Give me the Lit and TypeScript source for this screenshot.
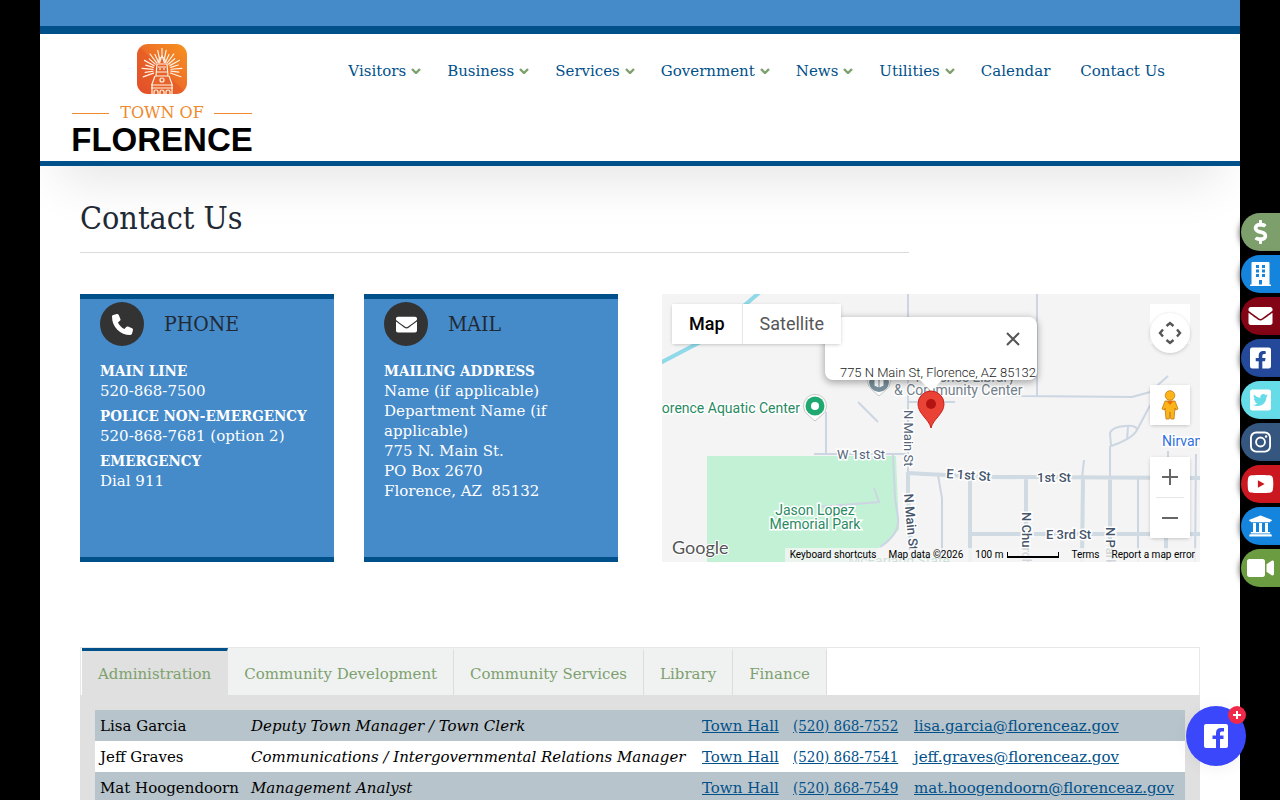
import { LitElement, html, css, svg, nothing } from "lit";
import { customElement, property, state } from "lit/decorators.js";
import { classMap } from "lit/directives/class-map.js";

type Icon = { box: string; path: string };

const ICONS: Record<string, Icon> = {
  phone: {
    box: "0 0 512 512",
    path: "M164.9 24.6c-7.7-18.6-28-28.5-47.4-23.2l-88 24C12.1 30.2 0 46 0 64C0 311.4 200.6 512 448 512c18 0 33.8-12.1 38.6-29.5l24-88c5.3-19.4-4.6-39.7-23.2-47.4l-96-40c-16.3-6.8-35.2-2.1-46.3 11.6L304.7 368C234.3 334.7 177.3 277.7 144 207.3L193.3 167c13.7-11.2 18.4-30 11.6-46.3l-40-96z",
  },
  envelope: {
    box: "0 0 512 512",
    path: "M502.3 190.8c3.9-3.1 9.7-.2 9.7 4.7V400c0 26.5-21.5 48-48 48H48c-26.5 0-48-21.5-48-48V195.6c0-5 5.7-7.8 9.7-4.7 22.4 17.4 52.1 39.5 154.1 113.6 21.1 15.4 56.7 47.8 92.2 47.6 35.7.3 72-32.8 92.3-47.6 102-74.1 131.6-96.3 154-113.7zM256 320c23.2.4 56.6-29.2 73.4-41.4 132.7-96.3 142.8-104.7 173.4-128.7 5.8-4.5 9.2-11.5 9.2-18.9v-19c0-26.5-21.5-48-48-48H48c-26.5 0-48 21.5-48 48v19c0 7.4 3.4 14.3 9.2 18.9 30.6 23.9 40.7 32.4 173.4 128.7 16.8 12.2 50.2 41.8 73.4 41.4z",
  },
  dollar: {
    box: "0 0 288 512",
    path: "M209.2 233.4l-108-31.6C88.7 198.2 80 186.5 80 173.5c0-16.3 13.2-29.5 29.5-29.5h66.3c12.2 0 24.2 3.7 34.2 10.5 6.1 4.1 14.3 3.1 19.5-2l34.8-34c7.1-6.9 6.1-18.4-1.8-24.5C238 74.8 207.4 64.1 176 64V16c0-8.8-7.2-16-16-16h-32c-8.8 0-16 7.2-16 16v48h-2.5C45.8 64-5.4 118.7.5 183.6c4.2 46.1 39.4 83.6 83.8 96.6l102.5 30c12.5 3.7 21.2 15.3 21.2 28.3 0 16.3-13.2 29.5-29.5 29.5h-66.3C100 368 88 364.3 78 357.5c-6.1-4.1-14.3-3.1-19.5 2l-34.8 34c-7.1 6.9-6.1 18.4 1.8 24.5 24.5 19.2 55.1 29.9 86.5 30v48c0 8.8 7.2 16 16 16h32c8.8 0 16-7.2 16-16v-48.2c46.6-.9 90.3-28.6 105.7-72.7 21.5-61.6-14.6-124.8-72.5-141.7z",
  },
  building: {
    box: "0 0 448 512",
    path: "M436 480h-20V24c0-13.300-10.700-24-24-24H56C42.700 0 32 10.700 32 24v456H12c-6.600 0-12 5.400-12 12v20h448v-20c0-6.600-5.400-12-12-12zM128 64h64v64h-64zM256 64h64v64h-64zM128 160h64v64h-64zM256 160h64v64h-64zM128 256h64v64h-64zM256 256h64v64h-64zM192 384h64v96h-64z",
  },
  facebook: {
    box: "0 0 448 512",
    path: "M400 32H48A48 48 0 0 0 0 80v352a48 48 0 0 0 48 48h137.250V327.690h-63V256h63v-54.640c0-62.150 37-96.480 93.670-96.480 27.140 0 55.520 4.840 55.520 4.840v61h-31.270c-30.810 0-40.420 19.120-40.420 38.730V256h68.780l-11 71.690h-57.780V480H400a48 48 0 0 0 48-48V80a48 48 0 0 0-48-48z",
  },
  twitter: {
    box: "0 0 448 512",
    path: "M400 32H48C21.5 32 0 53.5 0 80v352c0 26.5 21.5 48 48 48h352c26.5 0 48-21.5 48-48V80c0-26.5-21.5-48-48-48zm-48.9 158.8c.2 2.8.2 5.7.2 8.5 0 86.7-66 186.6-186.6 186.6-37.2 0-71.7-10.8-100.700-29.4 5.3.6 10.4.8 15.8.8 30.7 0 58.9-10.4 81.4-28-28.8-.6-53-19.5-61.3-45.5 10.1 1.5 19.2 1.5 29.6-1.2-30-6.1-52.5-32.5-52.5-64.4v-.8c8.7 4.9 18.9 7.9 29.6 8.3a65.447 65.447 0 0 1-29.2-54.6c0-12.2 3.2-23.4 8.9-33.1 32.3 39.8 80.8 65.8 135.2 68.6-9.3-44.5 24-80.6 64-80.6 18.9 0 35.9 7.9 47.9 20.7 14.8-2.8 29-8.3 41.6-15.8-4.9 15.2-15.2 28-28.8 36.1 13.2-1.4 26-5.1 37.8-10.2-8.9 13.1-20.1 24.7-32.900 34z",
  },
  instagram: {
    box: "0 0 448 512",
    path: "M132 32H316A132 132 0 0 1 448 164V348A132 132 0 0 1 316 480H132A132 132 0 0 1 0 348V164A132 132 0 0 1 132 32zM132 72A92 92 0 0 0 40 164V348A92 92 0 0 0 132 440H316A92 92 0 0 0 408 348V164A92 92 0 0 0 316 72zM224 141a115 115 0 1 1 0 230a115 115 0 1 1 0-230zM224 181a75 75 0 1 0 0 150a75 75 0 1 0 0-150zM343 110a27 27 0 1 1 0 54a27 27 0 1 1 0-54z",
  },
  youtube: {
    box: "0 0 576 512",
    path: "M549.655 124.083c-6.281-23.650-24.787-42.276-48.284-48.597C458.781 64 288 64 288 64S117.220 64 74.629 75.486c-23.497 6.322-42.003 24.947-48.284 48.597-11.412 42.867-11.412 132.305-11.412 132.305s0 89.438 11.412 132.305c6.281 23.650 24.787 41.500 48.284 47.821C117.220 448 288 448 288 448s170.780 0 213.371-11.486c23.497-6.321 42.003-24.171 48.284-47.821 11.412-42.867 11.412-132.305 11.412-132.305s0-89.438-11.412-132.305zm-317.510 213.508V175.185l142.739 81.205-142.739 81.201z",
  },
  bank: {
    box: "0 0 512 512",
    path: "M496 128v16a8 8 0 0 1-8 8h-24v12c0 6.627-5.373 12-12 12H60c-6.627 0-12-5.373-12-12v-12H24a8 8 0 0 1-8-8v-16a8 8 0 0 1 4.941-7.392l232-88a7.996 7.996 0 0 1 6.118 0l232 88A8 8 0 0 1 496 128zm-24 304H40c-13.255 0-24 10.745-24 24v16a8 8 0 0 0 8 8h464a8 8 0 0 0 8-8v-16c0-13.255-10.745-24-24-24zM96 192v192H60c-6.627 0-12 5.373-12 12v20h416v-20c0-6.627-5.373-12-12-12h-36V192h-64v192h-64V192h-64v192h-64V192H96z",
  },
  video: {
    box: "0 0 576 512",
    path: "M336.2 64H47.8C21.4 64 0 85.4 0 111.8v288.4C0 426.6 21.4 448 47.8 448h288.4c26.4 0 47.8-21.4 47.8-47.8V111.8c0-26.4-21.4-47.8-47.8-47.8zm189.4 37.7L416 177.3v157.4l109.6 75.5c21.2 14.6 50.4-.3 50.4-25.8V127.5c0-25.4-29.1-40.4-50.4-25.8z",
  },
};

const icon = (name: string) => html`<svg class="icon" viewBox=${ICONS[name].box} aria-hidden="true">
  <path fill="currentColor" fill-rule="evenodd" d=${ICONS[name].path}></path>
</svg>`;

@customElement("town-logo")
class TownLogo extends LitElement {
  static styles = css`
    :host { display: block; }
    .logo { display: block; width: 190px; height: 112px; }
    .town { font: 16px "DejaVu Serif", serif; fill: #ee8a2c; }
    .name { font: bold 33px "Liberation Sans", Arial, sans-serif; fill: #000; }
    .rule { fill: #f08a2c; }
  `;

  render() {
    const rays = Array.from({ length: 19 }, (_, i) => {
      const a = ((-200 + i * 12.2) * Math.PI) / 180;
      const r = i % 2 ? 17 : 20;
      const [cx, cy] = [95, 28];
      return svg`<line x1=${cx + 9 * Math.cos(a)} y1=${cy + 9 * Math.sin(a)} x2=${cx + r * Math.cos(a)} y2=${cy + r * Math.sin(a)}></line>`;
    });
    return html`<svg class="logo" viewBox="0 0 190 112" role="img" aria-label="Town of Florence">
      <defs>
        <linearGradient id="tile" x1="0" y1="1" x2="1" y2="0">
          <stop offset="0" stop-color="#e8532a"></stop>
          <stop offset=".45" stop-color="#ec6a28"></stop>
          <stop offset="1" stop-color="#f7931e"></stop>
        </linearGradient>
        <clipPath id="clip"><rect x="70" y="2" width="50" height="50" rx="11"></rect></clipPath>
      </defs>
      <g clip-path="url(#clip)">
        <rect x="70" y="2" width="50" height="50" fill="url(#tile)"></rect>
        <path d="M70 2L120 52H70Z" fill="#dc4428" opacity=".3"></path>
        <g stroke="#fff3e4" stroke-width="1.2" stroke-linecap="round">${rays}</g>
        <path d="M88 36L90 22L93 16L95 7L97 16L100 22L102 36L106 42V52H84V42Z" fill="#e8632c"></path>
        <g fill="none" stroke="#fff3e4" stroke-width="1.2">
          <path d="M95 6V14M92.500 21L95 13L97.500 21M90 22H100L101 34H89ZM91 25H99M90 30H100M93 15L91 21M97 15L99 21M88 34L85 42V52M102 34L105 42V52M84 43H106M84 46H106"></path>
          <circle cx="95" cy="38" r="2"></circle>
          <path d="M87 52V50A2 2 0 0 1 91 50V52M93 52V50A2 2 0 0 1 97 50V52M99 52V50A2 2 0 0 1 103 50V52M93 28V26M97 28V26"></path>
        </g>
      </g>
      <rect class="rule" x="5" y="71" width="37" height="1"></rect>
      <rect class="rule" x="147" y="71" width="38" height="1"></rect>
      <text class="town" x="95" y="76" text-anchor="middle">TOWN OF</text>
      <text class="name" x="95" y="109" text-anchor="middle">FLORENCE</text>
    </svg>`;
  }
}

@customElement("area-map")
class AreaMap extends LitElement {
  static styles = css`
    :host { display: block; position: relative; overflow: hidden; background: #f4f4f4; font-family: Roboto, sans-serif; }
    .canvas { display: block; width: 100%; height: 100%; }
    .thin { fill: none; stroke: #ccd6e2; stroke-width: 2; }
    .thick { fill: none; stroke: #cfdae3; stroke-width: 4; }
    .label { font: 13px Roboto, sans-serif; fill: #56657a; stroke: #fff; stroke-width: 3; paint-order: stroke; }
    .street { font-weight: 500; fill: #46566c; }
    .place { font-size: 14px; fill: #73808a; }
    .green { font-size: 14px; fill: #2a8a62; }
    .blue { font-size: 14px; fill: #2f71dd; }
    .google { font: 18px Lato, sans-serif; fill: #555; stroke: #fff; stroke-width: 2; paint-order: stroke; }
    button { border: 0; padding: 0; margin: 0; background: #fff; font: inherit; cursor: pointer; }
    .raised { box-shadow: 0 1px 4px -1px rgba(0, 0, 0, 0.3); }
    .types { position: absolute; left: 10px; top: 10px; display: flex; gap: 1px; background: #e6e6e6; }
    .types button { height: 40px; padding: 0 17px; font-size: 18px; color: #565656; }
    .types button.on { color: #000; font-weight: 500; }
    .controls { position: absolute; right: 10px; top: 10px; display: flex; flex-direction: column; }
    .camera { width: 40px; height: 49px; display: grid; align-content: end; background: linear-gradient(#fff 40px, transparent 40px); }
    .camera button { width: 40px; height: 40px; border-radius: 50%; }
    .person { width: 40px; height: 40px; margin-top: 32px; }
    .zoom { margin-top: 32px; background: #fff; display: flex; flex-direction: column; }
    .zoom button { width: 40px; height: 40px; }
    .zoom hr { width: 28px; height: 1px; border: 0; margin: 0 auto; background: #e6e6e6; }
    .controls svg { display: block; margin: auto; }
    .info { position: absolute; left: 50%; top: 23px; width: 212px; height: 63px; box-sizing: border-box; transform: translateX(-50%); background: #fff; border-radius: 8px; box-shadow: 0 2px 7px 1px rgba(0, 0, 0, 0.3); display: flex; flex-direction: column; align-items: flex-end; justify-content: space-between; }
    .info button { width: 48px; height: 48px; background: none; }
    .info p { margin: 0; padding-right: 1px; font-size: 13px; line-height: 15px; font-weight: 300; color: #222; white-space: nowrap; }
    .marker { position: absolute; left: 50%; top: 85px; transform: translateX(-50%); }
    .legal { position: absolute; right: 0; bottom: 0; height: 14px; padding: 0 5px; display: flex; align-items: center; gap: 12px; background: rgba(245, 245, 245, 0.8); font-size: 10px; line-height: 14px; color: #000; white-space: nowrap; }
    .legal a { color: inherit; text-decoration: none; }
    .legal button { background: none; color: inherit; }
    .scale { display: flex; gap: 4px; align-items: center; }
    .bar { width: 50px; height: 4px; border: solid #000; border-width: 0 1px 2px; }
  `;

  @state() private satellite = false;

  render() {
    return html`
      <svg class="canvas" viewBox="0 0 538 268" preserveAspectRatio="xMidYMid slice" aria-label="Street map of Florence">
        <path d="M45 162H234L237 236L218 253L200 268H45Z" fill="#c3f1d5"></path>
        <path d="M-4 70L42 46L98-2" fill="none" stroke="#8fd9e9" stroke-width="4"></path>
        <path class="thin" d="M246 0V179M152 160H247M164 118V160M196 108L216 128M246 108H293M231 161L233 204L236 224Q238 240 218 253M156 213L217 208L212 194M375 0V102M340 101L360 102L470 103L488 98L506 82M492 104L475 136Q470 145 449 152M449 152L448 139Q450 133 463 132Q475 131 475 136M466 133L465 146M448 152V184M422 166L420 184M276 181L280 204V268M476 184V268M506 157V184M534 160L533 268"></path>
        <path class="thick" d="M246 178V200L250 268M246 179L263 180L330 183L538 184M308 184V268M364 184V268M421 184L420 268M448 184V268M504 184V268M308 240H538"></path>
        <text class="label green" x="138" y="119" text-anchor="end">Florence Aquatic Center</text>
        <path d="M153 127L146 121A11.500 11.500 0 1 1 160 121Z" fill="#fff" stroke="#c8c8c8"></path>
        <circle cx="153" cy="112" r="9.500" fill="#1fa971"></circle><circle cx="153" cy="112" r="4" fill="#fff"></circle>
        <path d="M217 102L210 96A11.500 11.500 0 1 1 224 96Z" fill="#fff" stroke="#c8c8c8"></path>
        <circle cx="217" cy="88" r="10" fill="#78909c"></circle>
        <path d="M212 84L217 86L222 84V92L217 94L212 92ZM217 86V94" fill="#fff" stroke="#78909c"></path>
        <text class="label place" x="353" y="88" text-anchor="end">Florence Library</text>
        <text class="label place" x="232" y="101">&amp; Community Center</text>
        <text class="label green" x="153" y="221" text-anchor="middle">Jason Lopez</text>
        <text class="label green" x="153" y="235" text-anchor="middle">Memorial Park</text>
        <text class="label green" x="186" y="272">McFarland State</text>
        <text class="label" x="199" y="165" text-anchor="middle">W 1st St</text>
        <text class="label" transform="translate(242 116) rotate(90)">N Main St</text>
        <text class="label street" transform="translate(242 200) rotate(85)">N Main St</text>
        <text class="label street" transform="translate(284 184) rotate(4)">E 1st St</text>
        <text class="label street" x="375" y="188">1st St</text>
        <text class="label street" x="384" y="245">E 3rd St</text>
        <text class="label street" transform="translate(360 218) rotate(90)">N Church St</text>
        <text class="label street" transform="translate(444 233) rotate(90)">N Park St</text>
        <text class="label blue" x="500" y="152">Nirvana</text>
        <text class="google" x="10" y="260">Google</text>
      </svg>
      <div class="info">
        <button aria-label="Close">
          <svg width="14" height="14" viewBox="0 0 14 14"><path d="M1 1L13 13M13 1L1 13" stroke="#555" stroke-width="2"></path></svg>
        </button>
        <p>775 N Main St, Florence, AZ 85132</p>
      </div>
      <svg class="marker" width="28" height="50" viewBox="0 0 28 50">
        <path d="M2 0H26L14 12Z" fill="#fff"></path>
        <path d="M14 49C12 40 1 35 1 25A13 13 0 0 1 27 25C27 35 16 40 14 49Z" fill="#ea4335" stroke="#c5221f"></path>
        <circle cx="14" cy="25" r="5" fill="#b31412"></circle>
      </svg>
      <div class="types raised">
        <button class=${classMap({ on: !this.satellite })} @click=${() => (this.satellite = false)}>Map</button>
        <button class=${classMap({ on: this.satellite })} @click=${() => (this.satellite = true)}>Satellite</button>
      </div>
      <div class="controls">
        <div class="camera">
          <button class="raised" aria-label="Map camera controls">
            <svg width="24" height="24" viewBox="0 0 24 24"><path d="M8.500 5L12 2L15.500 5M8.500 19L12 22L15.500 19M5 8.500L2 12L5 15.500M19 8.500L22 12L19 15.500" fill="none" stroke="#555" stroke-width="2.400"></path></svg>
          </button>
        </div>
        <button class="person raised" aria-label="Street View">
          <svg width="18" height="30" viewBox="0 0 18 30">
            <path d="M4 11H14L17 19L14.500 20L14 18L13 29H9.800L9 22L8.200 29H5L4 18L3.500 20L1 19Z" fill="#fbb41a" stroke="#c47a12" stroke-width=".8"></path>
            <path d="M5.500 11H12.500L9 15Z" fill="#e8710a"></path>
            <circle cx="9" cy="5.500" r="4.800" fill="#fbb41a" stroke="#c47a12" stroke-width=".8"></circle>
          </svg>
        </button>
        <div class="zoom raised">
          <button aria-label="Zoom in"><svg width="16" height="16" viewBox="0 0 16 16"><path d="M8 0V16M0 8H16" stroke="#666" stroke-width="2"></path></svg></button>
          <hr />
          <button aria-label="Zoom out"><svg width="16" height="16" viewBox="0 0 16 16"><path d="M0 8H16" stroke="#666" stroke-width="2"></path></svg></button>
        </div>
      </div>
      <div class="legal">
        <button>Keyboard shortcuts</button>
        <span>Map data ©2026</span>
        <span class="scale">100 m <span class="bar"></span></span>
        <a href="#terms">Terms</a>
        <a href="#report">Report a map error</a>
      </div>
    `;
  }
}

@customElement("contact-card")
class ContactCard extends LitElement {
  static styles = css`
    :host { display: block; box-sizing: border-box; background: #458ac9; border: solid #00508a; border-width: 5px 0; padding: 3px 20px 51px; color: #fff; }
    .head { display: flex; align-items: center; gap: 20px; margin-bottom: 15px; }
    .badge { display: grid; place-items: center; width: 44px; height: 44px; border-radius: 50%; background: #333; }
    .icon { width: 21px; height: 21px; }
    h2 { margin: 0; font-family: "DejaVu Serif Condensed", "DejaVu Serif", serif; font-size: 21px; line-height: 24px; font-weight: 400; color: #212934; }
  `;

  @property() heading = "";
  @property() symbol = "phone";

  render() {
    return html`
      <div class="head"><span class="badge">${icon(this.symbol)}</span><h2>${this.heading}</h2></div>
      <slot></slot>
    `;
  }
}

const NAV: [string, boolean][] = [
  ["Visitors", true], ["Business", true], ["Services", true], ["Government", true],
  ["News", true], ["Utilities", true], ["Calendar", false], ["Contact Us", false],
];

const QUICK = [
  { icon: "dollar", label: "Pay a bill", tone: "sage" },
  { icon: "building", label: "Departments", tone: "sky" },
  { icon: "envelope", label: "Email", tone: "wine" },
  { icon: "facebook", label: "Facebook", tone: "navy" },
  { icon: "twitter", label: "Twitter", tone: "aqua" },
  { icon: "instagram", label: "Instagram", tone: "slate" },
  { icon: "youtube", label: "YouTube", tone: "red" },
  { icon: "bank", label: "Government", tone: "sky" },
  { icon: "video", label: "Meetings", tone: "leaf" },
];

const TABS = ["Administration", "Community Development", "Community Services", "Library", "Finance"];

const STAFF = [
  ["Lisa Garcia", "Deputy Town Manager / Town Clerk", "(520) 868-7552", "lisa.garcia@florenceaz.gov"],
  ["Jeff Graves", "Communications / Intergovernmental Relations Manager", "(520) 868-7541", "jeff.graves@florenceaz.gov"],
  ["Mat Hoogendoorn", "Management Analyst", "(520) 868-7549", "mat.hoogendoorn@florenceaz.gov"],
];

@customElement("app-root")
class AppRoot extends LitElement {
  static styles = css`
    :host { display: block; height: 100vh; overflow-y: auto; scrollbar-width: none; background: #000; color: #000; font-family: "DejaVu Serif", serif; font-size: 15px; line-height: 20px; }
    a { color: #00508a; }
    .page { min-height: 100vh; margin: 0 40px; background: #fff; overflow: clip; }
    .strip { height: 26px; background: #458ac9; border-bottom: 8px solid #00508a; }
    .header { display: flex; justify-content: space-between; align-items: flex-start; padding: 8px 75px 7px 27px; border-bottom: 5px solid #00508a; box-shadow: 0 35px 50px -20px rgba(0, 0, 0, 0.1); }
    .nav { display: flex; gap: 26px; padding-top: 19px; }
    .nav a { display: flex; align-items: center; gap: 5px; text-decoration: none; white-space: nowrap; }
    .nav a.plain + a.plain { margin-left: 4px; }
    .chevron { width: 10px; height: 6px; }
    .main { padding: 34px 40px 40px; }
    .title { margin: 0; width: 74%; padding-bottom: 15px; border-bottom: 1px solid #d9dbdc; font-family: "DejaVu Serif Condensed", "DejaVu Serif", serif; font-size: 32px; line-height: 37px; font-weight: 400; color: #212934; }
    .contact { display: grid; grid-template-columns: 254fr 254fr 552fr; gap: 30px; margin: 41px 0 85px; }
    .contact p { margin: 0 0 5px; }
    .contact strong { font-family: "DejaVu Serif Condensed", "DejaVu Serif", serif; }
    .map { margin-left: 14px; min-height: 268px; }
    .tabs { border: 1px solid #e6e8e8; display: flex; padding-left: 1px; }
    .tab { height: 47px; border: 0; border-top: 3px solid #f0f2f2; border-right: 1px solid #dcdede; margin: 0; padding: 2px 16px 0; background: #f0f2f2; color: #7da06d; font: inherit; cursor: pointer; }
    .tab.on { border-color: #00508a #e0e0e0 #e0e0e0; background: #e0e0e0; }
    .panel { background: #e0e0e0; padding: 15px; margin-top: -1px; position: relative; }
    table { width: 100%; border-collapse: collapse; table-layout: fixed; background: #fff; }
    td { height: 31px; padding: 0 5px; white-space: nowrap; }
    tr:nth-child(odd) { background: #b8c4cb; }
    .c1 { width: 151px; } .c2 { width: 451px; } .c3 { width: 91px; } .c4 { width: 121px; }
    .role { font-style: italic; }
    .number { font-family: "DejaVu Serif Condensed", "DejaVu Serif", serif; }
    .quick { position: fixed; right: 0; top: 213px; display: flex; flex-direction: column; gap: 4px; }
    .quick a { box-sizing: border-box; width: 39px; height: 38px; display: grid; place-items: center; border-radius: 19px 0 0 19px; color: #fff; box-shadow: -1px 1px 6px rgba(0, 0, 0, 0.7); }
    .quick .icon { height: 24px; width: 27px; }
    .sage { background: #7c9f6c; } .sky { background: #1484dc; } .wine { background: #830415; }
    .navy { background: #24499a; } .aqua { background: #66dce8; } .slate { background: #34567f; }
    .red { background: #cb1720; } .leaf { background: #6c9c42; }
    .chat { position: fixed; right: 34px; bottom: 34px; width: 60px; height: 60px; padding: 0; border: 0; border-radius: 50%; background: #3b47fb; box-shadow: 0 2px 16px rgba(0, 0, 0, 0.06); cursor: pointer; }
    .chat > svg { display: block; margin: auto; }
    .plus { position: absolute; right: 0; top: 0; width: 18px; height: 18px; display: grid; place-items: center; border-radius: 50%; background: #f02849; }
  `;

  @state() private tab = 0;

  render() {
    return html`
      <div class="page">
        <div class="strip"></div>
        <header class="header">
          <town-logo></town-logo>
          <nav class="nav">
            ${NAV.map(([name, sub]) => html`<a class=${classMap({ plain: !sub })} href="#">${name}${sub
              ? html`<svg class="chevron" viewBox="0 0 10 6"><path d="M1 1L5 5L9 1" fill="none" stroke="#7da06d" stroke-width="2.400"></path></svg>`
              : nothing}</a>`)}
          </nav>
        </header>
        <main class="main">
          <h1 class="title">Contact Us</h1>
          <section class="contact">
            <contact-card heading="PHONE" symbol="phone">
              <p><strong>MAIN LINE</strong><br />520-868-7500</p>
              <p><strong>POLICE NON-EMERGENCY</strong><br />520-868-7681 (option 2)</p>
              <p><strong>EMERGENCY</strong><br />Dial 911</p>
            </contact-card>
            <contact-card heading="MAIL" symbol="envelope">
              <p><strong>MAILING ADDRESS</strong><br />Name (if applicable)<br />Department Name (if applicable)<br />775 N. Main St.<br />PO Box 2670<br />Florence, AZ&nbsp; 85132</p>
            </contact-card>
            <area-map class="map"></area-map>
          </section>
          <div class="tabs" role="tablist">
            ${TABS.map((t, i) => html`<button role="tab" aria-selected=${i === this.tab} class=${classMap({ tab: true, on: i === this.tab })} @click=${() => (this.tab = i)}>${t}</button>`)}
          </div>
          <div class="panel" role="tabpanel">
            <table>
              <colgroup><col class="c1" /><col class="c2" /><col class="c3" /><col class="c4" /><col /></colgroup>
              <tbody>
                ${STAFF.map(([name, role, phone, mail]) => html`<tr>
                  <td>${name}</td>
                  <td class="role">${role}</td>
                  <td><a href="#hall">Town Hall</a></td>
                  <td class="number"><a href="tel:${phone}">${phone}</a></td>
                  <td><a href="mailto:${mail}">${mail}</a></td>
                </tr>`)}
              </tbody>
            </table>
          </div>
        </main>
      </div>
      <nav class="quick" aria-label="Quick links">
        ${QUICK.map((q) => html`<a class=${q.tone} href="#" aria-label=${q.label}>${icon(q.icon)}</a>`)}
      </nav>
      <button class="chat" aria-label="Open chat">
        <svg width="24" height="24" viewBox="0 0 24 24"><path fill="#fff" fill-rule="evenodd" d="M2 0H22A2 2 0 0 1 24 2V22A2 2 0 0 1 22 24H16V15H19.500V11.500H16V9Q16 7.500 17.500 7.500H20V4H17Q12 4 12 9V11.500H8.500V15H12V24H2A2 2 0 0 1 0 22V2A2 2 0 0 1 2 0Z"></path></svg>
        <span class="plus"><svg width="8" height="8" viewBox="0 0 8 8"><path d="M4 0V8M0 4H8" stroke="#fff" stroke-width="2"></path></svg></span>
      </button>
    `;
  }
}
